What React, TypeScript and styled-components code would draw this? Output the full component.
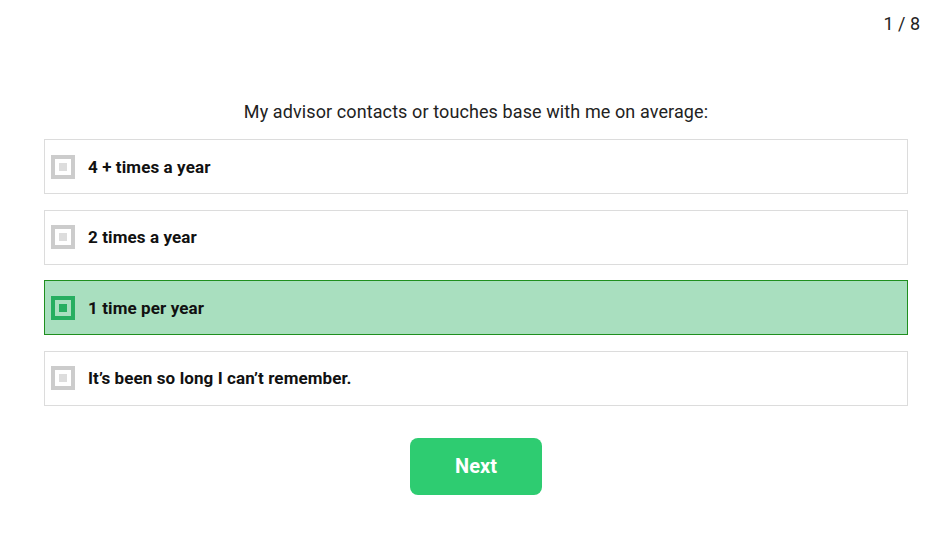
import { ReactElement, useState } from 'react';
import styled, { createGlobalStyle } from 'styled-components';

const GlobalStyle = createGlobalStyle`
  html, body {
    margin: 0;
    padding: 0;
    background: #fff;
    font-family: Roboto, "Liberation Sans", sans-serif;
    color: #111;
  }
`;

const options = [
  '4 + times a year',
  '2 times a year',
  '1 time per year',
  'It’s been so long I can’t remember.',
];

const Page = styled.div`
  width: 949px;
  height: 552px;
  box-sizing: border-box;
  padding: 12px 41px 0 44px;
  display: flex;
  flex-direction: column;
`;

const Counter = styled.div`
  align-self: flex-end;
  margin-right: -12px;
  font-size: 18px;
  line-height: 24px;
  color: #222;
`;

const Question = styled.h2`
  margin: 63px 0 14px;
  text-align: center;
  font-size: 18px;
  font-weight: 400;
  line-height: 26px;
  letter-spacing: 0.1px;
  color: #222;
`;

const List = styled.div`
  display: flex;
  flex-direction: column;
  gap: 15.67px;
`;

const Option = styled.div<{ $selected: boolean }>`
  height: 55px;
  box-sizing: border-box;
  display: flex;
  align-items: center;
  gap: 13px;
  padding: 0 6px;
  border: 1px solid ${(p) => (p.$selected ? '#1f8f1f' : '#dcdcdc')};
  background: ${(p) => (p.$selected ? '#a9dfbf' : '#fff')};
  cursor: pointer;
`;

const Check = styled.span<{ $selected: boolean }>`
  width: 24px;
  height: 24px;
  box-sizing: border-box;
  border: 4px solid ${(p) => (p.$selected ? '#27ae60' : '#cccccc')};
  padding: 4px;
  flex: none;
  &::after {
    content: '';
    display: block;
    width: 8px;
    height: 8px;
    background: ${(p) => (p.$selected ? '#27ae60' : '#dddddd')};
  }
`;

const Label = styled.span`
  font-size: 17px;
  font-weight: 700;
  letter-spacing: 0.1px;
  color: #111;
`;

const Footer = styled.div`
  display: flex;
  justify-content: center;
  margin-top: 32px;
`;

const NextButton = styled.button`
  width: 132px;
  height: 57px;
  border: none;
  border-radius: 8px;
  background: #2ecc71;
  color: #fff;
  font-family: Roboto, "Liberation Sans", sans-serif;
  font-size: 20px;
  font-weight: 700;
  cursor: pointer;
`;

const App = (): ReactElement => {
  const [selected, setSelected] = useState(2);

  return (
    <>
      <GlobalStyle />
      <Page>
        <Counter>1 / 8</Counter>
        <Question>My advisor contacts or touches base with me on average:</Question>
        <List>
          {options.map((text, i) => (
            <Option key={text} $selected={i === selected} onClick={() => setSelected(i)}>
              <Check $selected={i === selected} />
              <Label>{text}</Label>
            </Option>
          ))}
        </List>
        <Footer>
          <NextButton>Next</NextButton>
        </Footer>
      </Page>
    </>
  );
};

export default App;
